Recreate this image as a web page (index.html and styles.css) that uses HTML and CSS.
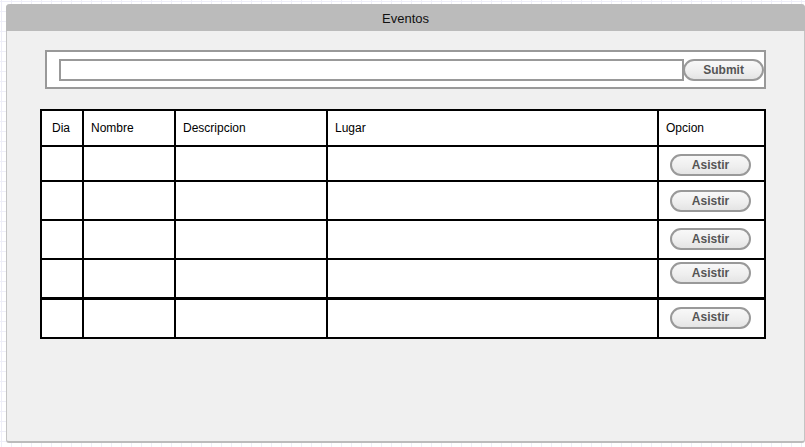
FILE: index.html
```html
<!DOCTYPE html>
<html lang="es">
<head>
<meta charset="utf-8">
<title>Eventos</title>
<link rel="stylesheet" href="styles.css">
</head>
<body>
<div class="window">
  <div class="titlebar">Eventos</div>
  <div class="content">
    <div class="search">
      <div class="input"></div>
      <button class="btn submit">Submit</button>
    </div>
    <table class="events">
      <colgroup>
        <col class="c-dia"><col class="c-nombre"><col class="c-desc"><col class="c-lugar"><col class="c-opcion">
      </colgroup>
      <thead>
        <tr class="r-head">
          <th class="first">Dia</th><th>Nombre</th><th>Descripcion</th><th>Lugar</th><th>Opcion</th>
        </tr>
      </thead>
      <tbody>
        <tr class="r1"><td></td><td></td><td></td><td></td><td class="opt"><button class="btn asistir">Asistir</button></td></tr>
        <tr class="r2"><td></td><td></td><td></td><td></td><td class="opt o2"><button class="btn asistir">Asistir</button></td></tr>
        <tr class="r3"><td></td><td></td><td></td><td></td><td class="opt"><button class="btn asistir">Asistir</button></td></tr>
        <tr class="r4"><td></td><td></td><td></td><td></td><td class="opt o4"><button class="btn asistir">Asistir</button></td></tr>
        <tr class="r5"><td></td><td></td><td></td><td></td><td class="opt"><button class="btn asistir">Asistir</button></td></tr>
      </tbody>
    </table>
  </div>
</div>
</body>
</html>
```

FILE: styles.css
```css
html, body {
  margin: 0;
  padding: 0;
}
body {
  width: 805px;
  height: 447px;
  overflow: hidden;
  font-family: "Liberation Sans", Arial, sans-serif;
  background-color: #ffffff;
  background-image:
    linear-gradient(to right, #eeeef8 1px, transparent 1px),
    linear-gradient(to bottom, #eeeef8 1px, transparent 1px);
  background-size: 10px 10px;
  background-position: 1px 1px;
}
.window {
  margin: 4px 1px 0 6px;
  width: 797px;
  height: 437px;
  background: #f0f0f0;
  border-left: 1px solid #c4c4c4;
  border-right: 1px solid #c4c4c4;
  border-bottom: 2px solid #bbbbbb;
  border-radius: 4px 4px 3px 3px;
  display: flex;
  flex-direction: column;
  box-sizing: content-box;
}
.titlebar {
  height: 27px;
  background: #bbbbbb;
  border-radius: 4px 4px 0 0;
  margin: 0 -1px;
  display: flex;
  align-items: center;
  justify-content: center;
  font-size: 13px;
  color: #111;
  padding-top: 1px;
  box-sizing: border-box;
}
.content {
  padding: 19px 0 0 38px;
  display: flex;
  flex-direction: column;
  gap: 20px;
}
.search {
  width: 721px;
  height: 39px;
  box-sizing: border-box;
  border: 2px solid #999999;
  background: #ffffff;
  display: flex;
  align-items: flex-start;
  padding: 7px 0 0 12px;
}
.input {
  width: 627px;
  height: 22px;
  box-sizing: border-box;
  border: 2px solid #999999;
  background: #fff;
}
.btn {
  box-sizing: border-box;
  height: 22px;
  border: 2px solid #999999;
  border-radius: 11px;
  background: linear-gradient(to bottom, #f8f8f8 0%, #eeeeee 60%, #e4e4e4 100%);
  font-family: "Liberation Sans", Arial, sans-serif;
  font-weight: bold;
  font-size: 12px;
  color: #555555;
  padding: 0;
  display: block;
  line-height: 17px;
}
.submit {
  width: 81px;
  margin-left: -1px;
}
.events {
  margin-left: -5px;
  border-collapse: collapse;
  table-layout: fixed;
  width: 726px;
  background: #fff;
  font-size: 12px;
  color: #000;
}
.events th, .events td {
  border: 2px solid #000;
  padding: 0;
}
.events th {
  font-weight: normal;
  text-align: left;
  padding-left: 7px;
  padding-top: 0;
}
.events th.first {
  padding-left: 10px;
}
.c-dia { width: 42px; }
.c-nombre { width: 92px; }
.c-desc { width: 152px; }
.c-lugar { width: 331px; }
.c-opcion { width: 107px; }
.r-head { height: 36px; }
.r1 { height: 35px; }
.r2 { height: 39px; }
.r3 { height: 39px; }
.r4 { height: 39px; }
.r5 { height: 40px; }
.r5 td { border-top-width: 3px; }
.events td.opt {
  vertical-align: top;
  padding: 7px 0 0 11px;
}
.events td.o2 { padding-top: 8px; }
.events td.o4 { padding-top: 2px; }
.asistir {
  width: 81px;
  height: 22px;
}
```
